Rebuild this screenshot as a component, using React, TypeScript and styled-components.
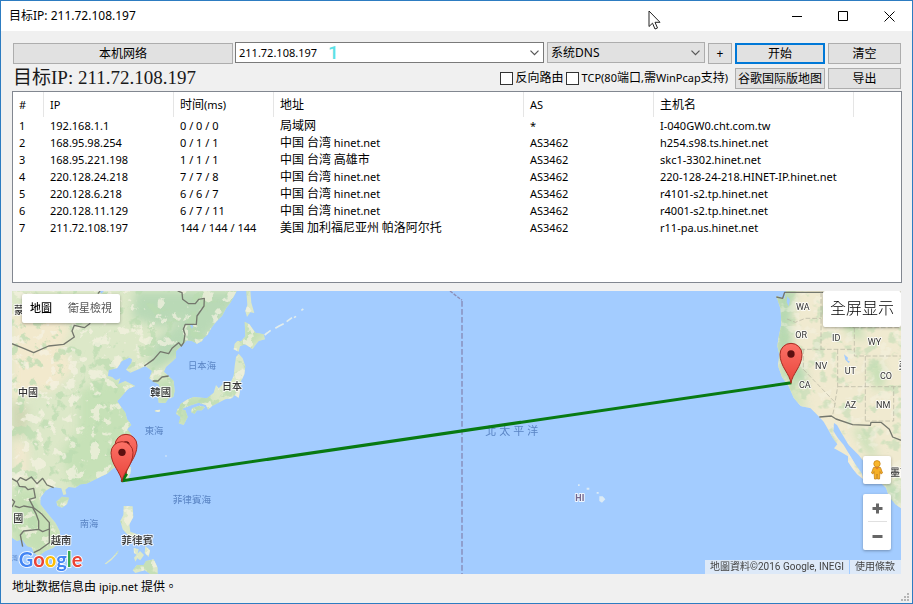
import React, { useState } from "react";
import styled, { createGlobalStyle, css } from "styled-components";

const latin = `"Noto Sans", "Noto Sans CJK SC", sans-serif`;
const mapFont = `Roboto, "Noto Sans CJK TC", sans-serif`;

const GlobalStyle = createGlobalStyle`
  * { box-sizing: border-box; }
  body { margin: 0; background: #f0f0f0; }
  button, input, select { font: inherit; color: inherit; margin: 0; }
`;

const Window = styled.div`
  position: relative;
  display: flex;
  flex-direction: column;
  min-height: 100vh;
  border: 1px solid #2d7cc1;
  background: #f0f0f0;
  color: #000;
  font: 12px/16px ${latin};
`;

const TitleBar = styled.header`
  display: flex;
  align-items: center;
  justify-content: space-between;
  height: 30px;
  padding-left: 8px;
  background: #fff;
`;

const WindowTitle = styled.h1`
  margin: 0;
  font-size: 12px;
  font-weight: 400;
`;

const WindowButtons = styled.div`
  display: flex;
`;

const WindowButton = styled.button`
  display: grid;
  place-items: center;
  width: 46px;
  height: 28px;
  padding: 0;
  border: 0;
  background: transparent;
`;

const Content = styled.main`
  display: flex;
  flex: 1;
  flex-direction: column;
  padding: 11px 10px 0 11px;
`;

const Toolbar = styled.div`
  display: flex;
  align-items: center;
  gap: 3px;
  height: 23px;
  padding: 0 1px;
`;

const OptionsBar = styled(Toolbar)`
  height: 26px;
`;

const PushButton = styled.button<{ $width: number; $primary?: boolean }>`
  flex: 0 0 ${(p) => p.$width}px;
  height: 21px;
  padding: 0;
  border: 1px solid #adadad;
  background: #e1e1e1;
  line-height: 19px;
  text-align: center;
  white-space: nowrap;
  ${(p) =>
    p.$primary &&
    css`
      border: 2px solid #0078d7;
      line-height: 17px;
    `}
`;

const field = css`
  display: flex;
  align-items: center;
  height: 21px;
  margin-bottom: 2px;
`;

const AddressBox = styled.div`
  ${field}
  position: relative;
  flex: 1;
  min-width: 0;
  margin-left: -1px;
  border: 1px solid #7a7a7a;
  background: #fff;
`;

const AddressInput = styled.input`
  flex: 1;
  min-width: 0;
  height: 17px;
  padding: 0 3px;
  border: 0;
  outline: 0;
  background: transparent;
  font-size: 11px;
`;

const DropButton = styled.button`
  display: grid;
  place-items: center;
  width: 17px;
  height: 19px;
  padding: 0;
  border: 0;
  background: transparent;
`;

const StepMark = styled.span`
  position: absolute;
  left: 92px;
  top: 0;
  color: #5ce1e6;
  font: 500 19px/19px Roboto, sans-serif;
`;

const SelectBox = styled.div`
  ${field}
  flex: 0 0 158px;
  border: 1px solid #adadad;
  background: #e1e1e1;
  > svg {
    margin: 0 4px 0 -13px;
    pointer-events: none;
  }
`;

const DnsSelect = styled.select`
  flex: 1;
  min-width: 0;
  height: 19px;
  padding: 0 3px;
  border: 0;
  appearance: none;
  background: transparent;
  font-size: 12px;
`;

const Target = styled.h2`
  flex: 1;
  margin: 0;
  color: #1a1a1a;
  font: 400 19px/24px "Liberation Serif", "Noto Sans CJK SC", serif;
`;

const CheckLabel = styled.label`
  display: flex;
  align-items: center;
  gap: 3px;
  white-space: nowrap;
`;

const CheckBox = styled.input`
  width: 13px;
  height: 13px;
  margin: 0;
  border: 1px solid #333;
  appearance: none;
  background: #fff;
  &:checked {
    background: #333;
    box-shadow: inset 0 0 0 2px #fff;
  }
`;

const Checks = styled.div`
  display: flex;
  gap: 2px;
  margin-right: 4px;
`;

const Small = styled.span`
  font-size: 11px;
`;

const ListBox = styled.section`
  min-height: 192px;
  border: 1px solid #828790;
  background: #fff;
  overflow: auto;
`;

const HopTable = styled.table`
  width: 100%;
  border-collapse: separate;
  border-spacing: 0;
  table-layout: fixed;
  white-space: nowrap;
`;

const Col = styled.col<{ $width?: number }>`
  width: ${(p) => (p.$width ? `${p.$width}px` : "auto")};
`;

const HeadCell = styled.th`
  height: 25px;
  padding: 0 0 0 6px;
  border-right: 1px solid #e5e5e5;
  font-weight: 400;
  text-align: left;
  &:last-child {
    border-right: 0;
  }
`;

const BodyCell = styled.td`
  height: 17px;
  padding: 0 0 0 6px;
  line-height: 17px;
`;

const MapPanel = styled.section`
  position: relative;
  flex: 1;
  min-height: 283px;
  margin: 8px 1px 0 0;
  overflow: hidden;
  background: #a3ccff;
  font-family: ${mapFont};
`;

const MapDrawing = styled.svg`
  position: absolute;
  inset: 0;
  width: 100%;
  height: 100%;
`;

const MapCard = styled.div`
  position: absolute;
  display: flex;
  border-radius: 2px;
  background: #fff;
  box-shadow: 0 1px 3px rgba(0, 0, 0, 0.3);
`;

const TypeCard = styled(MapCard)`
  left: 10px;
  top: 3px;
`;

const TypeButton = styled.button<{ $active?: boolean }>`
  height: 29px;
  padding: 0 8px;
  border: 0;
  background: transparent;
  color: ${(p) => (p.$active ? "#000" : "#565656")};
  font-size: 11px;
  font-weight: ${(p) => (p.$active ? 500 : 400)};
`;

const FullCard = styled(MapCard)`
  top: 0;
  right: 0;
`;

const FullButton = styled.button`
  height: 36px;
  padding: 0 7px;
  border: 0;
  background: transparent;
  font-size: 16px;
  font-weight: 300;
`;

const SideControls = styled.div`
  position: absolute;
  right: 10px;
  bottom: 24px;
  display: flex;
  flex-direction: column;
  gap: 10px;
`;

const SideCard = styled.div`
  display: flex;
  flex-direction: column;
  align-items: center;
  border-radius: 2px;
  background: #fff;
  box-shadow: 0 1px 3px rgba(0, 0, 0, 0.3);
`;

const SideButton = styled.button`
  display: grid;
  place-items: center;
  width: 28px;
  height: 28px;
  padding: 0;
  border: 0;
  background: transparent;
`;

const Divider = styled.hr`
  width: 19px;
  height: 1px;
  margin: -1px 0 0;
  border: 0;
  background: #e0e0e0;
`;

const Credits = styled.div`
  position: absolute;
  right: 0;
  bottom: 0;
  display: flex;
  gap: 1px;
  color: #444;
  font-size: 10px;
  line-height: 14px;
`;

const Credit = styled.span`
  padding: 0 5px;
  background: rgba(245, 245, 245, 0.7);
`;

const TermsLink = styled.a`
  padding: 0 6px 0 5px;
  background: rgba(245, 245, 245, 0.7);
  color: #444;
  text-decoration: none;
`;

const StatusBar = styled.footer`
  display: flex;
  align-items: center;
  justify-content: space-between;
  height: 29px;
  padding: 0 2px 4px 11px;
  font-family: "Noto Sans", "Noto Sans CJK TC", sans-serif;
  > svg {
    align-self: flex-end;
    margin-bottom: -3px;
  }
`;

const Pointer = styled.svg`
  position: absolute;
  left: 71%;
  top: 9px;
  pointer-events: none;
`;

const Chevron = () => (
  <svg width="9" height="6" viewBox="0 0 9 6" aria-hidden="true">
    <path d="M0.5 0.7 4.5 4.7 8.5 0.7" fill="none" stroke="#555" strokeWidth="1.2" />
  </svg>
);

const columns = [
  { label: "#", width: 31 },
  { label: "IP", width: 130 },
  { label: "时间(ms)", width: 100 },
  { label: "地址", width: 250 },
  { label: "AS", width: 130 },
  { label: "主机名", width: 200 },
  { label: "" },
];

const hops = [
  ["192.168.1.1", "0 / 0 / 0", "局域网", "*", "I-040GW0.cht.com.tw"],
  ["168.95.98.254", "0 / 1 / 1", "中国 台湾 hinet.net", "AS3462", "h254.s98.ts.hinet.net"],
  ["168.95.221.198", "1 / 1 / 1", "中国 台湾 高雄市", "AS3462", "skc1-3302.hinet.net"],
  ["220.128.24.218", "7 / 7 / 8", "中国 台湾 hinet.net", "AS3462", "220-128-24-218.HINET-IP.hinet.net"],
  ["220.128.6.218", "6 / 6 / 7", "中国 台湾 hinet.net", "AS3462", "r4101-s2.tp.hinet.net"],
  ["220.128.11.129", "6 / 7 / 11", "中国 台湾 hinet.net", "AS3462", "r4001-s2.tp.hinet.net"],
  ["211.72.108.197", "144 / 144 / 144", "美国 加利福尼亚州 帕洛阿尔托", "AS3462", "r11-pa.us.hinet.net"],
];

/* Sets Latin runs one size below the Chinese characters around them. */
function Mixed({ text }: { text: string }) {
  return (
    <>
      {text.split(/([ -~]+)/).map((run, i) =>
        i % 2 ? <Small key={i}>{run}</Small> : run
      )}
    </>
  );
}

const asiaCoast =
  "M0 0H674L655 35 643 50 630 75 612 92 600 108 586 132 575 140 570 150 555 158 540 150 525 148 508 165 492 180 492 200 480 212 462 228 456 242 470 256 485 270 488 300 484 318 470 322 460 336 440 335 437 310 446 298 440 280 425 272 412 262 420 240 400 225 380 235 355 245 342 236 358 216 360 205 352 200 330 210 315 232 290 237 288 255 300 258 312 268 325 262 318 280 340 270 370 285 352 292 345 297 325 320 315 330 325 345 340 365 345 385 358 402 345 415 358 430 352 470 340 500 325 520 300 535 285 548 270 555 240 570 222 578 205 580 190 590 170 588 160 596 163 610 154 612 148 592 120 588 100 600 85 620 85 640 105 665 130 695 143 720 145 750 125 770 100 780 80 795 65 785 60 770 45 765 30 745 15 750 0 740Z";

const islands = [
  "M703 0H715L718 35 727 66 715 64 705 78 700 60 706 42Z",
  "M698 92 712 100 730 125 755 130 759 145 740 150 728 165 722 174 700 160 684 166 680 182 665 175 668 158 676 150 688 150 700 136Z",
  "M672 198 680 188 692 202 700 225 697 250 685 275 684 300 680 322 668 312 660 322 640 325 622 334 600 345 588 356 582 342 560 335 530 345 500 358 505 340 525 326 545 318 585 322 605 305 612 282 620 292 640 272 655 275 665 255 668 225Z",
  "M498 352 520 358 527 378 515 402 500 397 506 378 492 368Z",
  "M540 352 562 344 578 348 570 358 555 358 548 368 538 364Z",
  "M345 522 357 528 355 548 343 577 335 560Z",
  "M133 632 150 617 171 620 165 640 150 650 136 644Z",
  "M335 645 362 646 364 678 352 700 355 722 372 728 388 738 380 746 345 730 332 715 325 690 334 672Z",
  "M362 838 375 822 395 822 402 810 425 805 437 830 437 849H415L398 838 370 846Z",
  "M365 770 380 775 376 792 366 786Z",
  "M384 780 396 792 385 808 376 802 370 812 366 800Z",
  "M400 765 414 778 410 798 398 786Z",
  "M278 818 300 800 320 778 316 788 298 808 282 820Z",
  "M428 358 445 356 442 363 430 362Z",
];

const americaCoast =
  "M2293 14 2318 24 2322 0H2667V652L2650 640 2630 615 2622 590 2600 570 2570 530 2540 492 2510 462 2488 425 2475 402 2466 396 2464 420 2478 442 2495 462 2515 495 2530 520 2550 548 2554 565 2535 550 2520 530 2508 512 2508 496 2485 482 2466 472 2476 460 2462 440 2448 415 2435 392 2422 378 2396 352 2366 345 2345 320 2330 285 2310 258 2298 225 2302 190 2296 165 2300 138 2308 100 2306 55Z";

const borders =
  "M0 158 35 172 65 185 110 165 155 160 187 138 180 120 187 103 217 110 235 97M258 8 264 0M497 0 510 5 512 25 530 38 550 38 560 25 577 22 576 45 555 75 553 100 520 100 514 115 519 130 515 155 508 165 500 155 480 172 470 188 445 182 425 205 397 225M422 270 438 270 450 258 470 255M0 563 15 572 25 560 42 568 58 558 75 578 92 562 105 582 125 590M15 570 22 586 40 588 48 596 65 592 70 620 52 625 65 650 90 670 104 686 112 695 112 755 85 775 65 785M0 625 8 632 0 648M8 645 22 650 35 645 62 650 72 668 80 690 80 715 35 720 25 732 32 767M80 715 92 722 112 714";

const americaBorders =
  "M2293 18 2312 22 2318 4H2667M2422 378 2458 375 2472 384 2522 401 2575 403 2577 394 2607 394 2632 415 2642 438 2667 448";

const stateLines =
  "M2325 84 2350 94 2380 82 2427 82M2427 4V175M2345 175H2527M2374 175V235L2470 335 2462 372M2477 175V287L2468 340M2477 287H2667M2560 195V392M2527 110V195H2667M2527 110H2667M2445 4 2460 60 2500 105 2527 110M2560 390H2645V287";

const markerShape = "M0 0C-3-28-33-50-33-87A33 33 0 0 1 33-87C33-50 3-28 0 0Z";

function Marker({ x, y }: { x: number; y: number }) {
  return (
    <g transform={`translate(${x} ${y})`}>
      <path d={markerShape} fill="url(#pin)" stroke="#a52a22" strokeWidth="3" />
      <circle cy="-88" r="11" fill="#5c1010" />
    </g>
  );
}

const countryLabels: [string, number, number, number][] = [
  ["蒙", 6, 70, 30],
  ["中國", 18, 316, 30],
  ["韓國", 415, 316, 31],
  ["日本", 630, 298, 30],
  ["國", 4, 692, 30],
  ["越南", 116, 760, 31],
  ["菲律賓", 328, 760, 32],
  ["墨西", 2634, 554, 30],
  ["美", 2660, 234, 30],
];

const seaLabels: [string, number, number, number][] = [
  ["日本海", 528, 234, 28],
  ["東海", 398, 429, 28],
  ["南海", 203, 708, 28],
  ["菲律賓海", 482, 637, 29],
  ["灣", 0, 808, 18],
];

const stateLabels: [string, number, number][] = [
  ["WA", 2352, 57],
  ["OR", 2350, 141],
  ["ID", 2460, 150],
  ["WY", 2567, 162],
  ["NV", 2409, 234],
  ["UT", 2498, 250],
  ["CO", 2604, 264],
  ["CA", 2361, 292],
  ["AZ", 2499, 352],
  ["NM", 2592, 352],
];

const logoLetters: [string, string][] = [
  ["G", "#4285f4"],
  ["o", "#ea4335"],
  ["o", "#fbbc05"],
  ["g", "#4285f4"],
  ["l", "#34a853"],
  ["e", "#ea4335"],
];

function RouteMap() {
  return (
    <MapDrawing viewBox="0 0 2667 849" preserveAspectRatio="xMidYMid slice" role="img" aria-label="路由地圖">
      <defs>
        <linearGradient id="pin" x1="0" y1="0" x2="0" y2="1">
          <stop offset="0" stopColor="#fc7267" />
          <stop offset="1" stopColor="#e8443a" />
        </linearGradient>
        <clipPath id="land">
          <path d={asiaCoast} />
          <path d={americaCoast} />
          {islands.map((d) => (
            <path key={d} d={d} />
          ))}
        </clipPath>
        <filter id="soft" x="-30%" y="-30%" width="160%" height="160%" colorInterpolationFilters="sRGB">
          <feGaussianBlur stdDeviation="12" />
        </filter>
        <filter id="pale" x="0" y="0" width="100%" height="100%" colorInterpolationFilters="sRGB">
          <feTurbulence type="fractalNoise" baseFrequency="0.03" numOctaves="4" seed="8" />
          <feColorMatrix values="0 0 0 0 0.96  0 0 0 0 0.95  0 0 0 0 0.89  14 0 0 0 -8.2" />
        </filter>
        <filter id="forest" x="0" y="0" width="100%" height="100%" colorInterpolationFilters="sRGB">
          <feTurbulence type="fractalNoise" baseFrequency="0.025" numOctaves="4" seed="21" />
          <feColorMatrix values="0 0 0 0 0.73  0 0 0 0 0.86  0 0 0 0 0.69  0 12 0 0 -6.9" />
        </filter>
      </defs>
      <rect width="2667" height="849" fill="#a3ccff" />
      <g clipPath="url(#land)">
        <rect width="800" height="849" fill="#dce8c8" />
        <rect x="2200" width="467" height="849" fill="#f0ead0" />
        <g filter="url(#soft)">
          <path d="M0 60 120 70 180 110 150 170 190 230 120 300 70 300 0 340Z" fill="#f2e9cd" />
          <path d="M0 430 50 470 50 560 0 550Z" fill="#f0e8ce" />
          <path d="M0 330 50 350 40 420 0 450Z" fill="#cfd6b4" />
          <path d="M370 0 700 0 560 170 400 250 430 150 520 80 450 110 360 80Z" fill="#b9d9b6" />
          <path d="M200 300 300 260 380 300 370 430 300 560 180 590 150 480 200 420Z" fill="#c6e1b7" />
          <path d="M0 600 60 590 150 730 100 800 0 750Z" fill="#c4dfb4" />
          <path d="M430 270 500 260 490 340 430 340ZM690 90 770 120 700 180ZM500 320 590 310 580 380 500 410Z" fill="#c0deb3" />
          <path d="M2290 0 2350 0 2335 110 2345 190 2385 250 2375 290 2320 250 2290 190Z" fill="#b5d8b1" />
          <path d="M2300 220 2350 290 2390 350 2350 350 2290 260Z" fill="#cfe3bb" />
          <path d="M2440 20 2530 60 2560 150 2510 130ZM2570 220 2610 210 2620 280 2590 300ZM2520 410 2560 420 2600 500 2570 490Z" fill="#c5dfb5" />
          <path d="M2600 560 2667 590 2667 660 2620 600Z" fill="#b8dab4" />
        </g>
        <g opacity="0.7">
          <rect width="800" height="849" filter="url(#forest)" />
          <rect x="2200" width="467" height="849" filter="url(#forest)" opacity="0.7" />
        </g>
        <g opacity="0.7">
          <rect width="800" height="849" filter="url(#pale)" />
          <rect x="2200" width="467" height="849" filter="url(#pale)" opacity="0.6" />
        </g>
        <path d="M2496 190 2508 200 2506 208 2514 212 2510 216 2500 206ZM2326 16 2334 26 2330 46 2324 34ZM532 98 544 104 540 114ZM262 0 276 0 268 8Z" fill="#a3ccff" />
      </g>
      <g fill="none" strokeLinejoin="round">
        <path d={borders} stroke="#74776d" strokeWidth="4" />
        <path d={americaBorders} stroke="#74776d" strokeWidth="4" />
        <path d={stateLines} stroke="#b3b2a0" strokeWidth="2" strokeDasharray="14 6" />
        <path d="M758 132 776 118M790 112 800 106 815 98M824 92 840 80M846 80 852 76M868 58 874 54" stroke="#e3edec" strokeWidth="5" />
        <path d="M1314 0 1350 28" stroke="#8c8cb4" strokeWidth="4" strokeDasharray="10 4" />
        <path d="M1350 30V849" stroke="#8f9fce" strokeWidth="6" strokeDasharray="17 7" />
      </g>
      <path d="M1698 580h5v5h-5ZM1724 590h8v6h-8ZM1754 603h6v5h-6ZM1762 616 1772 616 1780 625 1770 635 1762 630ZM460 493h4v4h-4Z" fill="#dcebf5" />

      <g fill="#5a84c4" fontFamily={mapFont}>
        {seaLabels.map(([name, x, y, size]) => (
          <text key={name} x={x} y={y} fontSize={size}>{name}</text>
        ))}
        {["北", "太", "平", "洋"].map((c, i) => (
          <text key={c} x={1420 + i * 42} y="431" fontSize="33">{c}</text>
        ))}
      </g>
      <g fill="#333" stroke="#fff" strokeOpacity="0.8" strokeWidth="6" paintOrder="stroke" strokeLinejoin="round" fontFamily={mapFont}>
        {countryLabels.map(([name, x, y, size]) => (
          <text key={name} x={x} y={y} fontSize={size} fontWeight="500">{name}</text>
        ))}
        {stateLabels.map(([name, x, y]) => (
          <text key={name} x={x} y={y} fontSize="27">{name}</text>
        ))}
        <text x="1690" y="630" fontSize="27" fontWeight="700" fill="#75688f">HI</text>
      </g>

      <Marker x={342} y={550} />
      <path d="M344 548 331 569 2338 275" fill="none" stroke="#087a12" strokeWidth="9" strokeLinejoin="round" />
      <Marker x={330} y={572} />
      <Marker x={2337} y={277} />

      <text x="20" y="827" fontSize="60" fontFamily="Lato, sans-serif" fontWeight="700" stroke="#fff" strokeWidth="5" paintOrder="stroke">
        {logoLetters.map(([letter, fill], i) => (
          <tspan key={i} fill={fill}>{letter}</tspan>
        ))}
      </text>
    </MapDrawing>
  );
}

export default function App() {
  const [address, setAddress] = useState("211.72.108.197");
  return (
    <>
      <GlobalStyle />
      <Window>
        <TitleBar>
          <WindowTitle>目标IP: 211.72.108.197</WindowTitle>
          <WindowButtons>
            <WindowButton aria-label="最小化">
              <svg width="11" height="11"><path d="M0 5.5H10" stroke="#000" /></svg>
            </WindowButton>
            <WindowButton aria-label="最大化">
              <svg width="11" height="11"><path d="M.5.5H9.5V9.5H.5Z" fill="none" stroke="#000" /></svg>
            </WindowButton>
            <WindowButton aria-label="关闭">
              <svg width="11" height="11"><path d="M.5.5 10.5 10.5M10.5.5.5 10.5" stroke="#000" /></svg>
            </WindowButton>
          </WindowButtons>
        </TitleBar>

        <Content>
          <Toolbar>
            <PushButton $width={220}>本机网络</PushButton>
            <AddressBox>
              <AddressInput aria-label="目标地址" value={address} onChange={(e) => setAddress(e.target.value)} />
              <StepMark>1</StepMark>
              <DropButton aria-label="历史记录"><Chevron /></DropButton>
            </AddressBox>
            <SelectBox>
              <DnsSelect aria-label="DNS">
                <option>系统DNS</option>
              </DnsSelect>
              <Chevron />
            </SelectBox>
            <PushButton $width={24}>+</PushButton>
            <PushButton $width={90} $primary>开始</PushButton>
            <PushButton $width={73}>清空</PushButton>
          </Toolbar>

          <OptionsBar>
            <Target>目标IP: 211.72.108.197</Target>
            <Checks>
              <CheckLabel><CheckBox type="checkbox" />反向路由</CheckLabel>
              <CheckLabel>
                <CheckBox type="checkbox" />
                <span><Mixed text="TCP(80端口,需WinPcap支持)" /></span>
              </CheckLabel>
            </Checks>
            <PushButton $width={90}>谷歌国际版地图</PushButton>
            <PushButton $width={73}>导出</PushButton>
          </OptionsBar>

          <ListBox>
            <HopTable>
              <colgroup>
                {columns.map((c) => <Col key={c.label} $width={c.width} />)}
              </colgroup>
              <thead>
                <tr>
                  {columns.map((c) => (
                    <HeadCell key={c.label} scope="col"><Mixed text={c.label} /></HeadCell>
                  ))}
                </tr>
              </thead>
              <tbody>
                {hops.map((hop, i) => (
                  <tr key={hop[0]}>
                    <BodyCell><Small>{i + 1}</Small></BodyCell>
                    {hop.map((value, j) => (
                      <BodyCell key={j}><Mixed text={value} /></BodyCell>
                    ))}
                    <BodyCell />
                  </tr>
                ))}
              </tbody>
            </HopTable>
          </ListBox>

          <MapPanel>
            <RouteMap />
            <TypeCard>
              <TypeButton $active>地圖</TypeButton>
              <TypeButton>衛星檢視</TypeButton>
            </TypeCard>
            <FullCard><FullButton>全屏显示</FullButton></FullCard>
            <SideControls>
              <SideCard>
                <SideButton aria-label="街景服務">
                  <svg width="14" height="20" viewBox="0 0 14 20">
                    <path d="M3.5 7.5H10.5L12.5 13 11 14 10 11.5 9.5 19H7.5L7 14 6.5 19H4.5L4 11.5 3 14 1.5 13Z" fill="#f6b026" stroke="#c98416" strokeWidth="0.8" />
                    <circle cx="7" cy="3.8" r="3.2" fill="#f9b62b" stroke="#c98416" strokeWidth="0.8" />
                    <path d="M5 7.5 7 9.5 9 7.5Z" fill="#e5762a" />
                  </svg>
                </SideButton>
              </SideCard>
              <SideCard>
                <SideButton aria-label="放大">
                  <svg width="11" height="11"><path d="M5.5.5V10.5M.5 5.5H10.5" stroke="#666" strokeWidth="3" /></svg>
                </SideButton>
                <Divider />
                <SideButton aria-label="縮小">
                  <svg width="11" height="11"><path d="M.5 5.5H10.5" stroke="#666" strokeWidth="3" /></svg>
                </SideButton>
              </SideCard>
            </SideControls>
            <Credits>
              <Credit>地圖資料©2016 Google, INEGI</Credit>
              <TermsLink href="#terms">使用條款</TermsLink>
            </Credits>
          </MapPanel>
        </Content>

        <StatusBar>
          <span><Mixed text="地址数据信息由 ipip.net 提供。" /></span>
          <svg width="9" height="9" aria-hidden="true">
            <path d="M6 0h2v2h-2ZM3 3h2v2h-2ZM6 3h2v2h-2ZM0 6h2v2h-2ZM3 6h2v2h-2ZM6 6h2v2h-2Z" fill="#b5b5b5" />
          </svg>
        </StatusBar>

        <Pointer width="13" height="20" viewBox="0 0 13 20" aria-hidden="true">
          <path d="M1 1V16.5L4.5 13.2 7 19 9.5 18 7 12.3H12Z" fill="#fff" stroke="#222" />
        </Pointer>
      </Window>
    </>
  );
}
